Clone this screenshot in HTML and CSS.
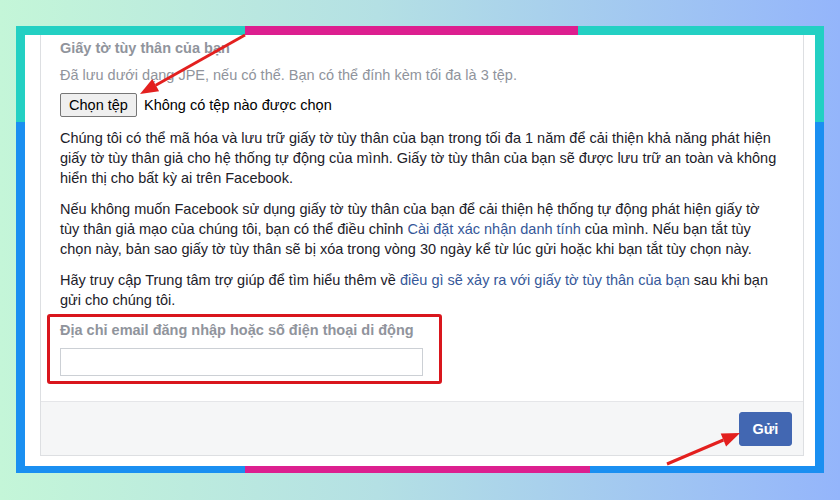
FILE: index.html
```html
<!DOCTYPE html>
<html lang="vi">
<head>
<meta charset="UTF-8">
<meta name="viewport" content="width=device-width, initial-scale=1.0">
<title>Giấy tờ tùy thân</title>
<link rel="stylesheet" href="styles.css">
</head>
<body>

<div class="frame">
  <div class="sheet">
    <div class="card">
      <div class="card-body">
        <div class="title">Giấy tờ tùy thân của bạn</div>
        <div class="hint">Đã lưu dưới dạng JPE, nếu có thể. Bạn có thể đính kèm tối đa là 3 tệp.</div>
        <div class="file-row">
          <button class="btn-file">Chọn tệp</button>
          <span class="file-name">Không có tệp nào được chọn</span>
        </div>

        <p>Chúng tôi có thể mã hóa và lưu trữ giấy tờ tùy thân của bạn trong tối đa 1 năm để cải thiện khả năng phát hiện giấy tờ tùy thân giả cho hệ thống tự động của mình. Giấy tờ tùy thân của bạn sẽ được lưu trữ an toàn và không hiển thị cho bất kỳ ai trên Facebook.</p>
        <p>Nếu không muốn Facebook sử dụng giấy tờ tùy thân của bạn để cải thiện hệ thống tự động phát hiện giấy tờ tùy thân giả mạo của chúng tôi, bạn có thể điều chỉnh <a href="#">Cài đặt xác nhận danh tính</a> của mình. Nếu bạn tắt tùy chọn này, bản sao giấy tờ tùy thân sẽ bị xóa trong vòng 30 ngày kể từ lúc gửi hoặc khi bạn tắt tùy chọn này.</p>
        <p class="last">Hãy truy cập Trung tâm trợ giúp để tìm hiểu thêm về <a href="#">điều gì sẽ xảy ra với giấy tờ tùy thân của bạn</a> sau khi bạn gửi cho chúng tôi.</p>

        <div class="field marked">
          <label for="email">Địa chỉ email đăng nhập hoặc số điện thoại di động</label>
          <input type="text" id="email" name="email">
        </div>
      </div>
      <div class="card-footer">
        <button class="btn-send">Gửi</button>
      </div>
    </div>
  </div>
</div>

<svg class="arrows" width="840" height="500" viewBox="0 0 840 500">
  <line x1="245" y1="35" x2="155.7" y2="85.2" />
  <polygon points="140,94 159.1,91.3 152.3,79.1" />
  <line x1="667" y1="464" x2="723.4" y2="440" />
  <polygon points="740,433 726.1,446.5 720.7,433.6" />
</svg>

</body>
</html>
```

FILE: styles.css
```css
body {
  font-family: 'Liberation Sans', Arial, sans-serif;
  font-size: 14.5px;
  color: #1d2129;
  margin: 0;
  padding: 26px 16px 0;
  height: 500px;
  box-sizing: border-box;
  overflow: hidden;
  background: linear-gradient(to right, #c4f6d8, #b4e0e4 45%, #94b5fb);
}
.frame {
  padding: 9px 9px 7px;
  background:
    linear-gradient(#dc1f8f, #dc1f8f) 229px 0 / 333px 9px no-repeat,
    linear-gradient(#dc1f8f, #dc1f8f) 229px 100% / 345px 7px no-repeat,
    linear-gradient(#23d0c3, #23d0c3) 0 0 / 100% 96px no-repeat,
    #1a8ff1;
}
.sheet {
  background-color: #fff;
  height: 431px;
  overflow: hidden;
  padding: 0 11px 0 15px;
}
.card {
  border: 1px solid #dddfe2;
  border-top: none;
}
.card-body {
  padding: 3px 24px 17px 19px;
}
.title {
  font-weight: bold;
  color: #90949c;
  line-height: 20px;
}
.hint {
  color: #90949c;
  line-height: 20px;
  margin-top: 7px;
}
.file-row {
  display: flex;
  align-items: center;
  margin-top: 8px;
}
.btn-file {
  font-family: 'Liberation Sans', Arial, sans-serif;
  font-size: 14.5px;
  width: 77px;
  height: 24px;
  padding: 0;
  background-color: #efefef;
  border: 1px solid #767676;
  border-radius: 2px;
  color: #000;
}
.file-name {
  margin-left: 7px;
  color: #000;
}
.card-body p {
  line-height: 20px;
  margin: 11px 0 0;
}
.card-body p.last {
  margin-bottom: 4px;
}
.card-body a {
  color: #365899;
  text-decoration: none;
}
.field label {
  display: block;
  font-weight: bold;
  color: #90949c;
  line-height: 20px;
}
.field input {
  display: block;
  width: 363px;
  height: 28px;
  box-sizing: border-box;
  margin-top: 8px;
  border: 1px solid #ccd0d5;
  background-color: #fff;
}
.marked {
  width: 395px;
  box-sizing: border-box;
  margin-left: -13px;
  padding: 3px 16px 5px 10px;
  border: 3px solid #d9161d;
  border-radius: 3px;
}
.card-footer {
  background-color: #f5f6f7;
  border-top: 1px solid #e5e6e9;
  height: 54px;
  display: flex;
  justify-content: flex-end;
  padding: 10px 11px 0 0;
  box-sizing: border-box;
}
.btn-send {
  width: 53px;
  height: 34px;
  background-color: #4267b2;
  border: 1px solid #4267b2;
  border-radius: 3px;
  color: #fff;
  font-family: 'Liberation Sans', Arial, sans-serif;
  font-weight: bold;
  font-size: 14.5px;
  padding: 0;
}
.arrows {
  position: absolute;
  left: 0;
  top: 0;
  pointer-events: none;
}
.arrows line {
  stroke: #e3201f;
  stroke-width: 3;
}
.arrows polygon {
  fill: #e3201f;
}
```
